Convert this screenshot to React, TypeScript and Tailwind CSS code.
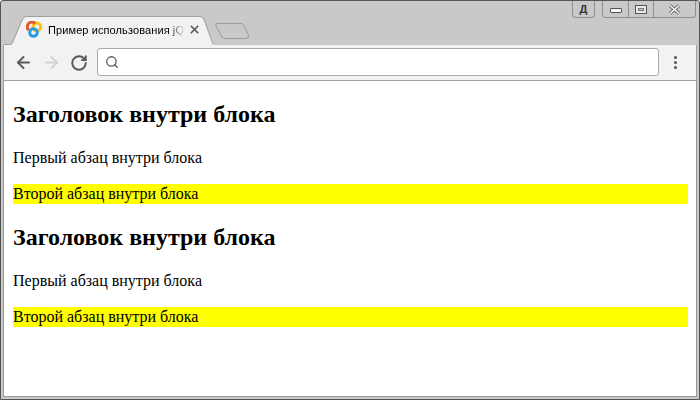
import type { FC } from 'react';
import { ArrowLeft, ArrowRight, RotateCw, Search, X } from 'lucide-react';

const Favicon: FC = () => (
  <svg width="17" height="17" viewBox="0 0 17 17" fill="none" className="shrink-0">
    <circle cx="10.8" cy="6" r="3.9" stroke="#f7c20e" strokeWidth="3" />
    <circle cx="7.5" cy="11.5" r="3.8" stroke="#2b9ae6" strokeWidth="3" />
    <path d="M2.6 9 A4.2 4.2 0 0 1 9.2 2.6" stroke="#e9552f" strokeWidth="3" />
  </svg>
);

const TabShape: FC = () => (
  <svg width="214" height="46" viewBox="0 0 214 46" className="absolute left-0 top-0">
    <path d="M3.5 45 H9 Q11 45 12 42 L22 18 Q23 15.5 26 15.5 H198 Q201 15.5 202 18 L212 42 L213 45" fill="#f2f2f2" />
    <path d="M3 43.5 H8 Q10.5 43.5 11.5 41 L21.5 18 Q22.5 15.5 25.5 15.5 H199 Q202 15.5 203 18 L212 43.5" fill="none" stroke="#a0a0a0" />
  </svg>
);

const NewTab: FC = () => (
  <svg width="36" height="20" viewBox="0 0 36 20" className="absolute left-[213px] top-[21px]">
    <path d="M2.5 1.5 H27 Q29 1.5 30 3.5 L34.5 13 Q35 16.5 32 16.5 H11 Q9 16.5 8 15 L2 4 Q1.5 1.5 2.5 1.5 Z" fill="#c9c9c9" stroke="#9a9a9a" />
  </svg>
);

const WindowControls: FC = () => (
  <div className="absolute right-[3px] top-0 flex items-start font-['Liberation_Sans',sans-serif]">
    <div className="mr-[7px] flex h-[17px] w-[23px] items-center justify-center rounded-b-[4px] border border-t-0 border-[#8f8f8f]">
      <span className="text-[11px] font-bold leading-none text-[#333]">Д</span>
    </div>
    <div className="flex h-[17px] rounded-b-[4px] border border-t-0 border-[#8f8f8f]">
      <div className="flex w-[26px] items-center justify-center border-r border-[#8f8f8f]">
        <div className="mt-[3px] h-[5px] w-[12px] rounded-[1px] border border-[#555] bg-[#f5f5f5]" />
      </div>
      <div className="flex w-[25px] items-center justify-center border-r border-[#8f8f8f]">
        <div className="flex h-[9px] w-[12px] items-center justify-center border border-[#555] bg-[#e8e8e8]">
          <div className="h-[3px] w-[6px] border border-[#777] bg-[#ccc]" />
        </div>
      </div>
      <div className="flex w-[41px] items-center justify-center">
        <svg width="13" height="11" viewBox="0 0 13 11">
          <path d="M2 1.5 L11 9.5 M11 1.5 L2 9.5" stroke="#666" strokeWidth="3.2" />
          <path d="M2 1.5 L11 9.5 M11 1.5 L2 9.5" stroke="#fff" strokeWidth="1.4" />
        </svg>
      </div>
    </div>
  </div>
);

const Block: FC = () => (
  <div>
    <h2 className="mb-[20px] mt-[20px] text-[24px] font-bold leading-[27px] text-black">Заголовок внутри блока</h2>
    <p className="my-[16px] text-[16px] leading-[20px] text-black">Первый абзац внутри блока</p>
    <p className="mt-[16px] bg-[#ffff00] text-[16px] leading-[20px] text-black">Второй абзац внутри блока</p>
  </div>
);

export default function App() {
  return (
    <div className="flex h-[400px] w-[700px] flex-col overflow-hidden rounded-t-[3px] border border-[#555] bg-[#c9c9c9]">
      <div className="relative h-[44px] shrink-0">
        <TabShape />
        <NewTab />
        <div className="absolute left-[25px] top-[20px] flex items-center">
          <Favicon />
          <span className="ml-[5px] w-[137px] overflow-hidden whitespace-nowrap font-['Liberation_Sans',sans-serif] text-[11px] leading-[16px] tracking-[0.1px] text-black [mask-image:linear-gradient(to_right,black_88%,transparent)]">
            Пример использования jQuery
          </span>
          <X size={13} strokeWidth={3} className="ml-[3px] text-[#555]" />
        </div>
        <WindowControls />
      </div>
      <div className="mx-[2px] flex h-[36px] shrink-0 items-center border-x border-b border-[#a0a0a0] bg-[#f2f2f2]">
        <ArrowLeft size={19} strokeWidth={2.4} className="ml-[10px] text-[#5a5a5a]" />
        <ArrowRight size={19} strokeWidth={2.4} className="ml-[9px] text-[#d2d2d2]" />
        <RotateCw size={18} strokeWidth={2.6} className="ml-[9px] text-[#5a5a5a]" />
        <div className="mb-[1px] ml-[9px] flex h-[28px] w-[562px] items-center rounded-[3px] border border-[#a9a9a9] bg-white pl-[7px]">
          <Search size={14} strokeWidth={2.2} className="text-[#5a5a5a]" />
        </div>
        <div className="ml-[15px] flex flex-col gap-[2px]">
          <div className="h-[3px] w-[3px] rounded-full bg-[#555]" />
          <div className="h-[3px] w-[3px] rounded-full bg-[#555]" />
          <div className="h-[3px] w-[3px] rounded-full bg-[#555]" />
        </div>
      </div>
      <div className="mx-[2px] mb-[2px] flex-1 border-x border-b border-[#9a9a9a] bg-white pl-[9px] pr-[8px] font-['Liberation_Serif',serif]">
        <Block />
        <Block />
      </div>
    </div>
  );
}
